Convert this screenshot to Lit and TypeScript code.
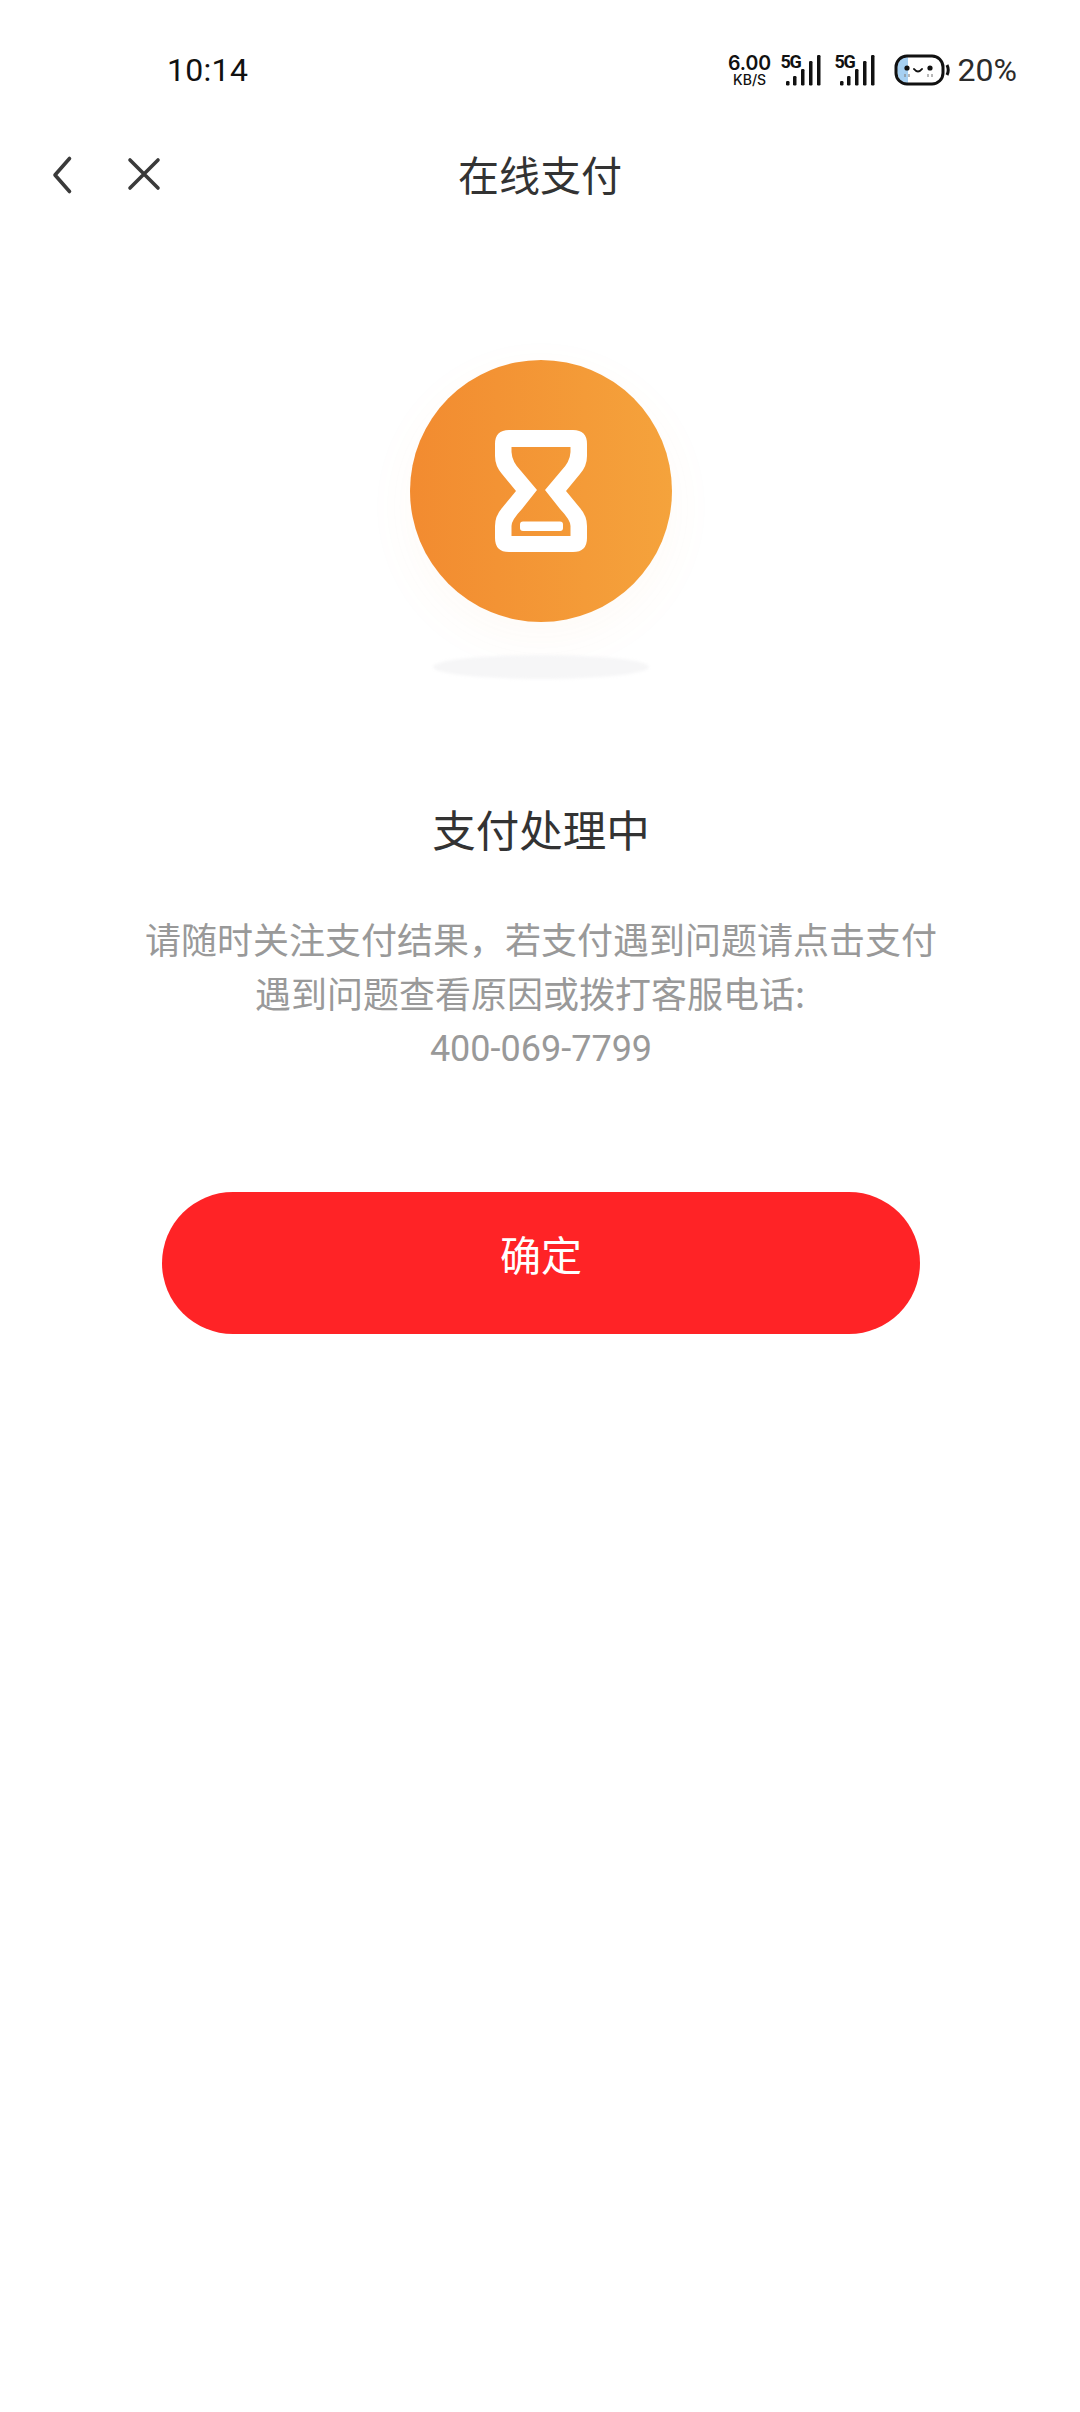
import { LitElement, html, css, svg } from "lit";
import { customElement } from "lit/decorators.js";

const signal = () => html`<div class="sig">
  <span class="g5">5G</span>
  <svg width="40" height="31" viewBox="0 0 40 31">
    ${[[5, 26, 3.5, 4.5], [12, 21, 3.5, 9.5], [20, 14, 3.5, 16.5], [28, 6, 3.5, 24.5], [36, 0, 3.5, 30.5]].map(
      ([x, y, w, h]) => svg`<rect x=${x} y=${y} width=${w} height=${h} rx="1.2" fill="#111"/>`
    )}
  </svg>
</div>`;

@customElement("app-root")
export class AppRoot extends LitElement {
  static styles = css`
    :host {
      display: block;
      width: 1080px;
      height: 2412px;
      background: #fff;
      font-family: "Noto Sans CJK SC", "Noto Sans", sans-serif;
      overflow: hidden;
    }
    .status {
      height: 140px;
      display: flex;
      align-items: center;
      box-sizing: border-box;
      padding: 0 63px 0 167px;
      justify-content: space-between;
    }
    .time {
      font-family: Roboto, sans-serif;
      font-size: 32px;
      color: #111;
      letter-spacing: 0.3px;
    }
    .right {
      display: flex;
      align-items: center;
      height: 40px;
    }
    .speed {
      width: 42px;
      display: flex;
      flex-direction: column;
      align-items: center;
      font-family: Inter, sans-serif;
      color: #111;
      line-height: 1;
      font-weight: 500;
      margin-right: 10px;
      white-space: nowrap;
    }
    .speed b {
      font-size: 19.500px;
      font-weight: 600;
      line-height: 19px;
    }
    .speed span {
      font-size: 14px;
      line-height: 14px;
    }
    .sig {
      position: relative;
      width: 40px;
      height: 31px;
      margin-right: 14px;
    }
    .sig svg {
      position: absolute;
      left: 0;
      top: 0;
    }
    .g5 {
      position: absolute;
      left: 0;
      top: -1px;
      font-family: Roboto, sans-serif;
      font-size: 18px;
      font-weight: 700;
      letter-spacing: -1.500px;
      color: #111;
      line-height: 16px;
    }
    .batt {
      margin: 0 8px 0 5px;
      display: block;
    }
    .pct {
      font-family: Roboto, sans-serif;
      font-size: 32px;
      color: #2b2b2b;
      line-height: 40px;
    }
    .nav {
      height: 72px;
      position: relative;
      display: flex;
      align-items: center;
      justify-content: center;
      margin-left: 2px;
    }
    .nav .icons {
      position: absolute;
      left: 46px;
      top: -1px;
      height: 72px;
      display: flex;
      align-items: center;
      gap: 47px;
    }
    .title {
      font-size: 41px;
      color: #333;
      line-height: 72px;
      padding: 0 2px 7px 0;
    }
    .main {
      display: flex;
      flex-direction: column;
      align-items: center;
      margin-left: 2px;
    }
    .hero {
      position: relative;
      width: 262px;
      height: 262px;
      margin-top: 148px;
      border-radius: 50%;
      background: linear-gradient(90deg, #f28b30, #f5a33c);
      box-shadow: 0 16px 50px rgba(245, 160, 70, 0.05);
      display: flex;
      align-items: center;
      justify-content: center;
    }
    .shadow {
      width: 216px;
      height: 24px;
      margin-top: 33px;
      border-radius: 50%;
      background: #f6f6f7;
      filter: blur(1.500px);
    }
    h1 {
      margin: 118px 0 0;
      font-size: 43.500px;
      font-weight: 400;
      color: #333;
      line-height: 64px;
    }
    .desc {
      margin-top: 51px;
      width: 820px;
      text-align: center;
      font-size: 36px;
      line-height: 53.500px;
      color: #999;
    }
    .desc .l2 {
      padding-right: 22px;
    }
    .desc .num {
      font-family: Roboto, sans-serif;
    }
    .btn {
      margin-top: 115.500px;
      width: 758px;
      height: 142px;
      border-radius: 71px;
      border: 0;
      padding: 0 0 20px;
      background: #ff2326;
      color: #fff;
      font: inherit;
      font-size: 41px;
      display: flex;
      align-items: center;
      justify-content: center;
    }
  `;

  render() {
    return html`
      <div class="status">
        <div class="time">10:14</div>
        <div class="right">
          <div class="speed"><b>6.00</b><span>KB/S</span></div>
          ${signal()} ${signal()}
          <svg class="batt" width="56" height="32" viewBox="0 0 56 32">
            <path d="M3 16 C3 7 8 3 14 3 H14 V29 C8 29 3 25 3 16Z" fill="#a6d0f2" />
            <rect x="2" y="2" width="47" height="28" rx="11" fill="none" stroke="#111" stroke-width="3" />
            <path d="M53 11 q2.500 5 0 10" fill="none" stroke="#111" stroke-width="3" />
            <circle cx="13" cy="14" r="2.600" fill="#111" />
            <circle cx="36" cy="14" r="2.600" fill="#111" />
            <path d="M20 15 q4 5 8 0" fill="none" stroke="#111" stroke-width="2" stroke-linecap="round" />
            <path d="M11 20v3M15 20v3M34 20v3M38 20v3" stroke="#888" stroke-width="1.200" />
          </svg>
          <span class="pct">20%</span>
        </div>
      </div>
      <div class="nav">
        <div class="icons">
          <svg width="32" height="40" viewBox="0 0 32 40">
            <path d="M21.500 3.500 L7 20 L21.500 36.500" fill="none" stroke="#3a3a3a" stroke-width="3.600" stroke-linecap="round" stroke-linejoin="round" />
          </svg>
          <svg width="36" height="36" viewBox="0 0 36 36">
            <path d="M3 3 L31 31 M31 3 L3 31" fill="none" stroke="#3a3a3a" stroke-width="3.600" stroke-linecap="round" />
          </svg>
        </div>
        <div class="title">在线支付</div>
      </div>
      <div class="main">
        <div class="hero">
          <svg width="92" height="122" viewBox="0 0 92 122">
            <path fill="#fff" fill-rule="evenodd" d="M14 0 H78 Q92 0 92 14 V26 Q92 36 85 44 L71 61 L85 78 Q92 86 92 96 V108 Q92 122 78 122 H14 Q0 122 0 108 V96 Q0 86 7 78 L21 61 L7 44 Q0 36 0 26 V14 Q0 0 14 0 Z
            M16.500 17 V22 Q17 32 26 41 L42 60 L27 79 Q16.500 90 16.500 96 V106 H75.500 V96 Q75.500 90 65 79 L50 60 L66 41 Q75 32 75.500 22 V17 Z" />
            <rect x="25" y="91.500" width="43" height="9.500" rx="3" fill="#fff" />
          </svg>
        </div>
        <div class="shadow"></div>
        <h1>支付处理中</h1>
        <div class="desc">
          请随时关注支付结果，若支付遇到问题请点击支付<br /><span class="l2">遇到问题查看原因或拨打客服电话:</span><br /><span class="num">400-069-7799</span>
        </div>
        <button class="btn">确定</button>
      </div>
    `;
  }
}
